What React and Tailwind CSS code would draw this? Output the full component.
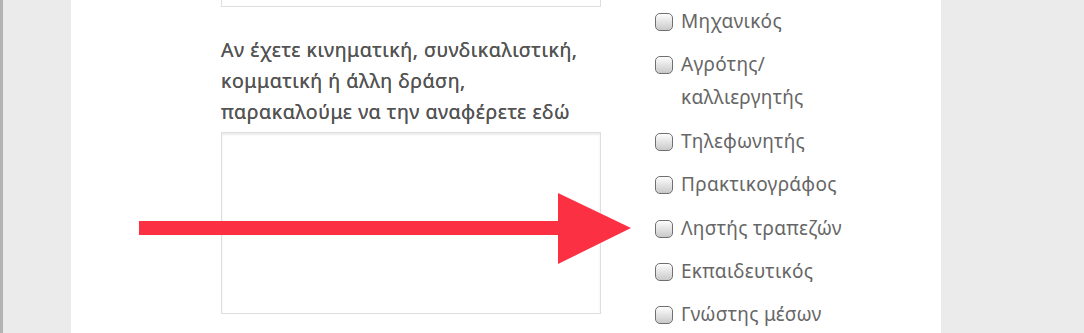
const jobs = [
  'Μηχανικός',
  'Αγρότης/ καλλιεργητής',
  'Τηλεφωνητής',
  'Πρακτικογράφος',
  'Ληστής τραπεζών',
  'Εκπαιδευτικός',
  'Γνώστης μέσων',
];

function Checkbox() {
  return (
    <span className="mt-[8px] h-[18px] w-[18px] shrink-0 rounded-[5px] border border-[#6f6f6f] bg-gradient-to-b from-[#fdfdfd] to-[#c9c9c9] shadow-[inset_0_1px_1px_rgba(255,255,255,0.9)]" />
  );
}

function Arrow() {
  return (
    <svg
      className="pointer-events-none absolute left-[139px] top-[193px]"
      width="494"
      height="72"
      viewBox="0 0 494 72"
    >
      <rect x="0" y="28" width="421" height="14" fill="#fc3043" />
      <polygon points="419,0 492,35 419,71" fill="#fc3043" />
    </svg>
  );
}

export default function App() {
  return (
    <div className="relative flex h-[333px] w-[1084px] overflow-hidden bg-[#ebebeb] font-['Noto_Sans',sans-serif]">
      <div className="w-[71px] shrink-0 border-l-[3px] border-[#b3b3b3] bg-[#ebebeb]" />

      <div className="flex w-[870px] shrink-0 bg-white pl-[150px]">
        <div className="w-[380px] shrink-0">
          <div className="h-[7px] border-x border-b border-[#dedede]" />
          <p className="mt-[27px] text-[19.5px] leading-[31px] tracking-[0.55px] text-[#545454] [text-shadow:0_0_0.3px_#545454]">
            Αν έχετε κινηματική, συνδικαλιστική,
            <br />
            κομματική ή άλλη δράση,
            <br />
            παρακαλούμε να την αναφέρετε εδώ
          </p>
          <div className="mt-[5px] h-[182px] border border-[#dedede] shadow-[inset_0_2px_2px_rgba(0,0,0,0.08)]" />
        </div>

        <ul className="ml-[54px] mt-[5px] flex w-[195px] flex-col gap-[10.4px]">
          {jobs.map((job) => (
            <li key={job} className="flex gap-[8px]">
              <Checkbox />
              <span className="text-[19px] leading-[33px] tracking-[0.3px] text-[#666666]">{job}</span>
            </li>
          ))}
        </ul>
      </div>

      <div className="flex-1 bg-[#ebebeb]" />

      <Arrow />
    </div>
  );
}
